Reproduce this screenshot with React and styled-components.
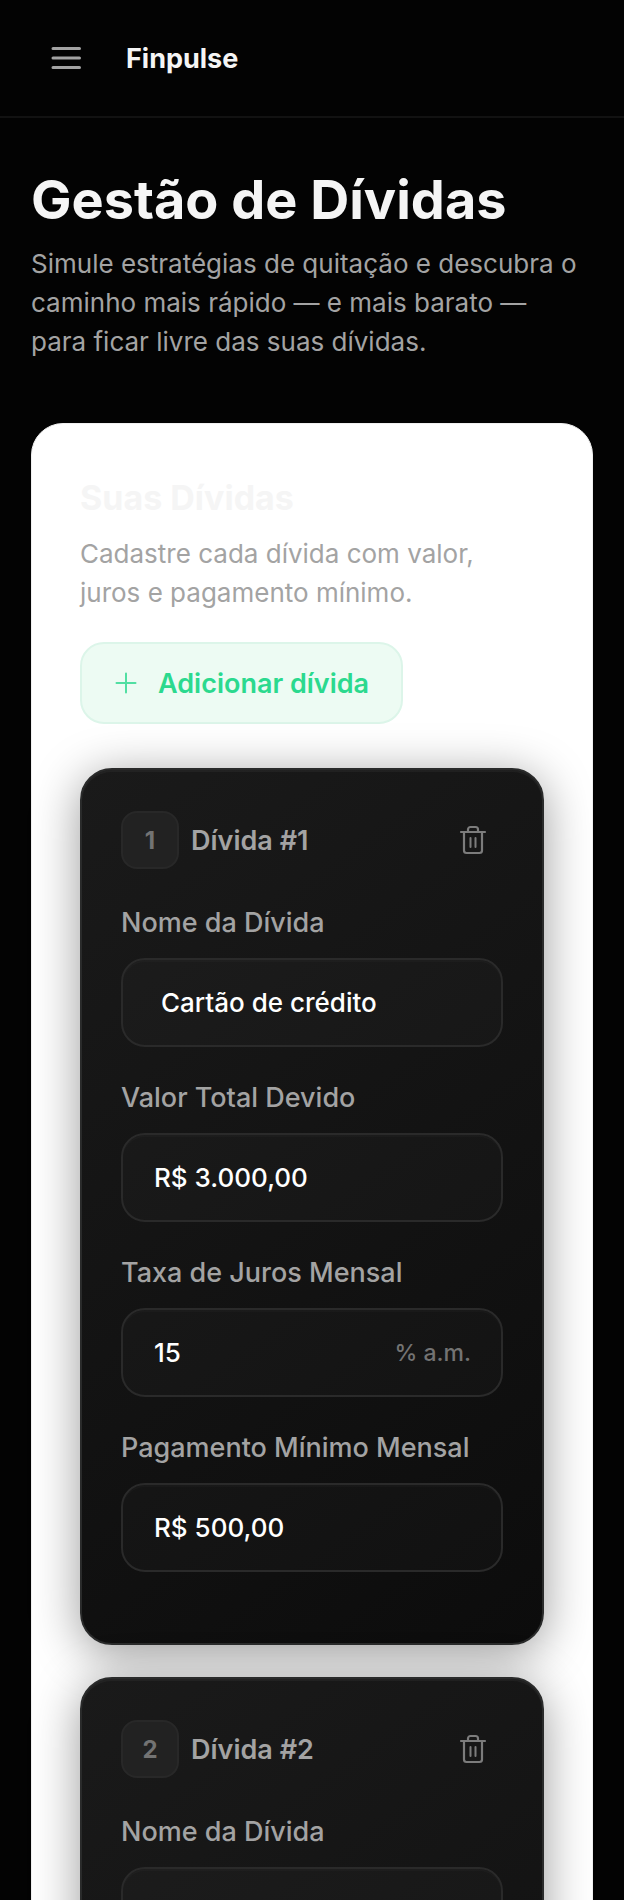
import React, { useState } from 'react'
import styled, { createGlobalStyle } from 'styled-components'

const GlobalStyle = createGlobalStyle`
    *, *::before, *::after {
        box-sizing: border-box;
    }
    body {
        margin: 0;
        background: #030303;
        font-family: Inter, "Liberation Sans", sans-serif;
        -webkit-font-smoothing: antialiased;
    }
    button, input {
        font-family: inherit;
    }
`

const Page = styled.div`
    min-height: 100vh;
    background: #030303;
    color: #f5f5f5;
`
const Header = styled.header`
    display: flex;
    align-items: center;
    gap: 30px;
    height: 118px;
    padding: 0 36px;
    border-bottom: 2px solid #121212;
`
const MenuButton = styled.button`
    display: flex;
    align-items: center;
    justify-content: center;
    width: 60px;
    height: 60px;
    padding: 0;
    border: none;
    background: none;
    color: #a3a3a3;
    cursor: pointer;
`
const Brand = styled.span`
    font-size: 27px;
    font-weight: 700;
`
const Main = styled.main`
    padding: 52px 31px 64px;
`
const Title = styled.h1`
    margin: 0;
    font-size: 54px;
    font-weight: 700;
    line-height: 60px;
    color: #f5f5f5;
`
const Text = styled.p`
    margin: 0;
    padding-right: 8px;
    font-size: 26px;
    line-height: 39px;
    color: #a3a3a3;
`
const Intro = styled.div`
    display: flex;
    flex-direction: column;
    gap: 14px;
    margin-bottom: 62px;
`
const Panel = styled.section`
    padding: 48px;
    border: 1px solid #f0f0f0;
    border-radius: 32px;
    background: #ffffff;
`
const PanelHeader = styled.div`
    display: flex;
    flex-direction: column;
    align-items: flex-start;
    gap: 10px;
`
const PanelTitle = styled.h2`
    margin: 0;
    font-size: 34px;
    font-weight: 700;
    line-height: 52px;
    color: #f5f5f5;
`
const AddButton = styled.button`
    display: flex;
    align-items: center;
    gap: 18px;
    height: 82px;
    margin-top: 20px;
    padding: 0 32px 0 30px;
    border: 2px solid #dcf5e9;
    border-radius: 24px;
    background: #edfbf3;
    color: #2bd98e;
    font-size: 27px;
    font-weight: 600;
    cursor: pointer;
`
const DebtList = styled.div`
    display: flex;
    flex-direction: column;
    gap: 32px;
    margin-top: 44px;
`
const DebtCard = styled.article`
    padding: 40px 39px 71px;
    border: 2px solid #2a2b2b;
    border-radius: 32px;
    background: linear-gradient(145deg, #1a1a1a, #0c0c0c);
    box-shadow: 0 8px 48px rgba(0, 0, 0, 0.4), inset 0 2px 0 rgba(255, 255, 255, 0.04);
`
const DebtHeader = styled.div`
    display: flex;
    align-items: center;
    gap: 12px;
    min-height: 60px;
    margin-bottom: 34px;
`
const Badge = styled.span`
    display: flex;
    align-items: center;
    justify-content: center;
    width: 58px;
    height: 58px;
    border: 2px solid #282828;
    border-radius: 16px;
    background: #222222;
    color: #737373;
    font-size: 24px;
    font-weight: 700;
`
const DebtTitle = styled.h3`
    flex: 1;
    margin: 0;
    font-size: 27px;
    font-weight: 600;
    color: #a3a3a3;
`
const RemoveButton = styled.button`
    display: flex;
    align-items: center;
    justify-content: center;
    width: 60px;
    height: 58px;
    padding: 0;
    border: none;
    background: none;
    color: #7c7c7c;
    cursor: pointer;
`
const Fields = styled.div`
    display: flex;
    flex-direction: column;
    gap: 32px;
`
const Field = styled.div`
    display: flex;
    flex-direction: column;
    gap: 16px;
`
const Label = styled.label`
    font-size: 27px;
    font-weight: 500;
    line-height: 38px;
    color: #a3a3a3;
`
const InputBox = styled.div`
    display: flex;
    align-items: center;
    height: 89px;
    padding: 0 30px 0 ${({ $indent }) => ($indent ? '38px' : '31px')};
    border: 2px solid #2a2a2a;
    border-radius: 24px;
    background: rgba(255, 255, 255, 0.02);
    box-shadow: inset 0 2px 0 rgba(255, 255, 255, 0.02);
`
const Input = styled.input`
    flex: 1;
    min-width: 0;
    padding: 0;
    border: none;
    outline: none;
    background: none;
    color: #ffffff;
    font-size: 26px;
    font-weight: 500;
`
const Unit = styled.span`
    font-size: 23px;
    font-weight: 500;
    color: #737373;
`

const MenuIcon = () => (
  <svg width="30" height="28" viewBox="0 0 30 28" fill="none" stroke="currentColor" strokeWidth="3" strokeLinecap="round" aria-hidden="true">
    <path d="M2 4.500h26.500M2 14h26.500M2 23.500h26.500" />
  </svg>
)

const PlusIcon = () => (
  <svg width="28" height="28" viewBox="0 0 28 28" fill="none" stroke="currentColor" strokeWidth="2" strokeLinecap="round" opacity="0.8" aria-hidden="true">
    <path d="M14 4.500v19M4.500 14h19" />
  </svg>
)

const TrashIcon = () => (
  <svg width="28" height="32" viewBox="0 0 28 32" fill="none" stroke="currentColor" strokeWidth="2.2" strokeLinecap="round" strokeLinejoin="round" aria-hidden="true">
    <path d="M2 8h24M5 8v18.500a2.500 2.500 0 0 0 2.500 2.500h13a2.500 2.500 0 0 0 2.500-2.500V8M9 8V5.500a2.500 2.500 0 0 1 2.500-2.500h5a2.500 2.500 0 0 1 2.500 2.500v2.500" />
    <path d="M11.500 14v9M16.500 14v9" strokeWidth="2" />
  </svg>
)

const fields = [
  { name: 'nome', label: 'Nome da Dívida', indent: true },
  { name: 'valor', label: 'Valor Total Devido' },
  { name: 'juros', label: 'Taxa de Juros Mensal', unit: '% a.m.' },
  { name: 'minimo', label: 'Pagamento Mínimo Mensal' },
]

const emptyDebt = { nome: '', valor: 'R$ 0,00', juros: '0', minimo: 'R$ 0,00' }

const initialDebts = [
  { id: 1, nome: 'Cartão de crédito', valor: 'R$ 3.000,00', juros: '15', minimo: 'R$ 500,00' },
  { id: 2, nome: 'Cheque especial', valor: 'R$ 0,00', juros: '0', minimo: 'R$ 0,00' },
]

const Debt = ({ debt, number, onChange, onRemove }) => (
  <DebtCard>
    <DebtHeader>
      <Badge>{number}</Badge>
      <DebtTitle>Dívida #{number}</DebtTitle>
      <RemoveButton type="button" aria-label="Remover dívida" onClick={onRemove}>
        <TrashIcon />
      </RemoveButton>
    </DebtHeader>
    <Fields>
      {fields.map((field) => {
        const id = `${field.name}-${debt.id}`
        return (
          <Field key={field.name}>
            <Label htmlFor={id}>{field.label}</Label>
            <InputBox $indent={field.indent}>
              <Input id={id} value={debt[field.name]} onChange={(e) => onChange(field.name, e.target.value)} />
              {field.unit && <Unit>{field.unit}</Unit>}
            </InputBox>
          </Field>
        )
      })}
    </Fields>
  </DebtCard>
)

const App = () => {
  const [debts, setDebts] = useState(initialDebts)

  const addDebt = () => {
    setDebts([...debts, { ...emptyDebt, id: Date.now() }])
  }
  const changeDebt = (id, name, value) => {
    setDebts(debts.map((debt) => (debt.id === id ? { ...debt, [name]: value } : debt)))
  }
  const removeDebt = (id) => {
    setDebts(debts.filter((debt) => debt.id !== id))
  }

  return (
    <Page>
      <GlobalStyle />
      <Header>
        <MenuButton type="button" aria-label="Abrir menu">
          <MenuIcon />
        </MenuButton>
        <Brand>Finpulse</Brand>
      </Header>
      <Main>
        <Intro>
          <Title>Gestão de Dívidas</Title>
          <Text>Simule estratégias de quitação e descubra o caminho mais rápido — e mais barato — para ficar livre das suas dívidas.</Text>
        </Intro>
        <Panel>
          <PanelHeader>
            <PanelTitle>Suas Dívidas</PanelTitle>
            <Text>Cadastre cada dívida com valor, juros e pagamento mínimo.</Text>
            <AddButton type="button" onClick={addDebt}>
              <PlusIcon />
              Adicionar dívida
            </AddButton>
          </PanelHeader>
          <DebtList>
            {debts.map((debt, index) => (
              <Debt
                key={debt.id}
                debt={debt}
                number={index + 1}
                onChange={(name, value) => changeDebt(debt.id, name, value)}
                onRemove={() => removeDebt(debt.id)}
              />
            ))}
          </DebtList>
        </Panel>
      </Main>
    </Page>
  )
}

export default App
